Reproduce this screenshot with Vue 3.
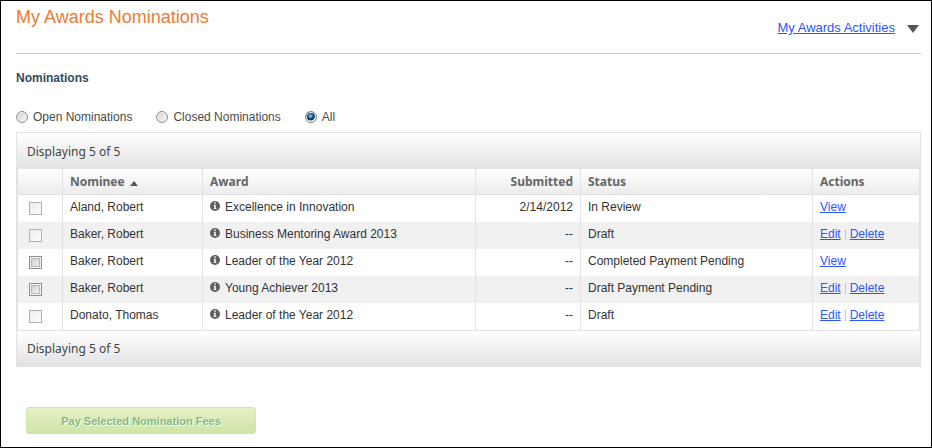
<script setup>
import { ref, computed } from 'vue'

const filters = ['Open Nominations', 'Closed Nominations', 'All']
const filter = ref('All')
const selected = ref([])

const nominations = [
  { id: 1, nominee: 'Aland, Robert', award: 'Excellence in Innovation', submitted: '2/14/2012', status: 'In Review', actions: ['View'], payable: false },
  { id: 2, nominee: 'Baker, Robert', award: 'Business Mentoring Award 2013', submitted: '--', status: 'Draft', actions: ['Edit', 'Delete'], payable: false },
  { id: 3, nominee: 'Baker, Robert', award: 'Leader of the Year 2012', submitted: '--', status: 'Completed Payment Pending', actions: ['View'], payable: true },
  { id: 4, nominee: 'Baker, Robert', award: 'Young Achiever 2013', submitted: '--', status: 'Draft Payment Pending', actions: ['Edit', 'Delete'], payable: true },
  { id: 5, nominee: 'Donato, Thomas', award: 'Leader of the Year 2012', submitted: '--', status: 'Draft', actions: ['Edit', 'Delete'], payable: false },
]

const summary = computed(() => `Displaying ${nominations.length} of ${nominations.length}`)
</script>

<template>
  <main class="page">
    <header class="top">
      <h1>My Awards Nominations</h1>
      <div class="activities">
        <a href="#activities">My Awards Activities</a>
        <svg class="caret" width="12" height="8" viewBox="0 0 12 8" aria-hidden="true"><path d="M0 0h12L6 8z" fill="#555" /></svg>
      </div>
    </header>

    <h2>Nominations</h2>

    <div class="filters" role="radiogroup">
      <label v-for="f in filters" :key="f">
        <input v-model="filter" type="radio" name="filter" :value="f" />
        <span>{{ f }}</span>
      </label>
    </div>

    <section class="grid">
      <div class="bar">{{ summary }}</div>
      <table>
        <colgroup>
          <col class="c-check" />
          <col class="c-nominee" />
          <col />
          <col class="c-submitted" />
          <col class="c-status" />
          <col class="c-actions" />
        </colgroup>
        <thead>
          <tr>
            <th></th>
            <th>
              Nominee
              <svg class="sort" width="8" height="5" viewBox="0 0 8 5" aria-hidden="true"><path d="M4 0L8 5H0z" fill="#555" /></svg>
            </th>
            <th>Award</th>
            <th class="right">Submitted</th>
            <th>Status</th>
            <th>Actions</th>
          </tr>
        </thead>
        <tbody>
          <tr v-for="n in nominations" :key="n.id">
            <td class="check">
              <input :id="'pick-' + n.id" v-model="selected" type="checkbox" :value="n.id" :disabled="!n.payable" />
            </td>
            <td><label :for="'pick-' + n.id">{{ n.nominee }}</label></td>
            <td>
              <div class="award">
                <svg width="10" height="10" viewBox="0 0 10 10" aria-hidden="true">
                  <circle cx="5" cy="5" r="5" fill="#5e5e5e" />
                  <path d="M4.200 1.300h1.600v1.500H4.200zM3.500 3.800h2.300v3.400h.7V8h-3v-.8h.7V4.600h-.7z" fill="#f4f4f4" />
                </svg>
                <span>{{ n.award }}</span>
              </div>
            </td>
            <td class="right">{{ n.submitted }}</td>
            <td>{{ n.status }}</td>
            <td>
              <div class="actions">
                <a v-for="a in n.actions" :key="a" :href="'#' + a.toLowerCase()">{{ a }}</a>
              </div>
            </td>
          </tr>
        </tbody>
      </table>
      <div class="bar bottom">{{ summary }}</div>
    </section>

    <button class="pay" type="button" disabled>Pay Selected Nomination Fees</button>
  </main>
</template>

<style>
body {
  background: #fff;
}
</style>

<style scoped>
.page {
  box-sizing: border-box;
  min-height: 100vh;
  border: 1px solid #000;
  padding: 0 10px 12px 15px;
  font: 12px/16px "Liberation Sans", Arial, sans-serif;
  color: #333;
}
a {
  color: #2b55ff;
  text-decoration: underline;
}
.top {
  display: flex;
  justify-content: space-between;
  border-bottom: 1px solid #c8c8c8;
  height: 52px;
}
h1 {
  margin: 4px 0 0;
  font-size: 18px;
  line-height: 24px;
  font-weight: 400;
  color: #e87d34;
}
.activities {
  display: flex;
  align-items: center;
  align-self: flex-start;
  gap: 12px;
  margin-top: 19px;
  padding-right: 2px;
  font-size: 13px;
}
.caret {
  margin-top: 2px;
}
h2 {
  margin: 16px 0 0;
  font-size: 12px;
  line-height: 16px;
  font-weight: 700;
  color: #35495a;
}
.filters {
  display: flex;
  gap: 24px;
  margin-top: 23px;
  color: #4a4a4a;
}
.filters label {
  display: flex;
  align-items: center;
  gap: 5px;
}
input {
  appearance: none;
  box-sizing: border-box;
  margin: 0;
  flex: none;
}
.filters input {
  width: 12px;
  height: 12px;
  border: 1px solid #8e8f8f;
  border-radius: 50%;
  background: linear-gradient(135deg, #cfcfcf, #fafafa);
  box-shadow: inset 0 0 0 1px #f2f2f2;
}
.filters input:checked {
  border-color: #7d858c;
  background: radial-gradient(circle at 45% 40%, #8fdcff 0, #2a7fb5 2px, #12375a 3px, #12375a 4px, #e8eef2 5px);
}
.grid {
  margin-top: 7px;
  border: 1px solid #e2e2e2;
}
.bar {
  height: 36px;
  padding: 0 10px;
  line-height: 37px;
  font-family: "Noto Sans", sans-serif;
  font-size: 12px;
  color: #444;
  background: linear-gradient(#fff, #e2e2e2);
}
.bar.bottom {
  height: 35px;
  line-height: 36px;
  border-top: 1px solid #e2e2e2;
}
table {
  width: 100%;
  table-layout: fixed;
  border-collapse: separate;
  border-spacing: 0;
  border: 0 solid #e2e2e2;
  border-width: 0 1px;
}
.c-check { width: 45px; }
.c-nominee { width: 140px; }
.c-submitted { width: 105px; }
.c-status { width: 232px; }
.c-actions { width: 106px; }
th,
td {
  box-sizing: border-box;
  padding: 0 7px;
  text-align: left;
  border-right: 1px solid #e2e2e2;
}
th:last-child,
td:last-child {
  border-right: 0;
}
th {
  height: 26px;
  padding-top: 1px;
  border-bottom: 1px solid #e2e2e2;
  background: linear-gradient(#fff, #ececec);
  font-family: "Noto Sans", sans-serif;
  font-size: 12px;
  font-weight: 700;
  color: #666;
}
.sort {
  margin-left: 2px;
}
td {
  height: 27px;
  padding-bottom: 4px;
}
tbody tr:nth-child(even) {
  background: #f1f1f1;
}
th.right,
td.right {
  text-align: right;
}
td.check {
  padding: 0 0 0 11px;
}
.check input {
  display: block;
  width: 13px;
  height: 13px;
  border: 1px solid #8e8f8f;
  background: linear-gradient(135deg, #c6cbd1, #f8f8f8);
  box-shadow: inset 0 0 0 1px #f4f4f4, inset 0 0 0 2px #b4b8bc;
}
.check input:disabled {
  border-color: #b1b1b1;
  background: linear-gradient(135deg, #ececec, #fbfbfb);
  box-shadow: none;
}
.award {
  display: flex;
  align-items: center;
  gap: 5px;
}
.award svg {
  margin-bottom: 2px;
}
.actions {
  display: flex;
}
.actions a + a {
  position: relative;
  margin-left: 9px;
}
.actions a + a::before {
  content: "";
  position: absolute;
  left: -5px;
  top: 3px;
  width: 1px;
  height: 11px;
  background: #b9cfc6;
}
.pay {
  display: block;
  margin: 40px 0 0 10px;
  width: 230px;
  height: 27px;
  padding: 0;
  border: 1px solid #d3e2b2;
  border-radius: 3px;
  background: linear-gradient(#e4f0c4, #d0e5a8);
  font: 700 11px/16px "Liberation Sans", Arial, sans-serif;
  color: #86b884;
  text-shadow: 1px 1px 0 #f8fcee;
}
</style>
